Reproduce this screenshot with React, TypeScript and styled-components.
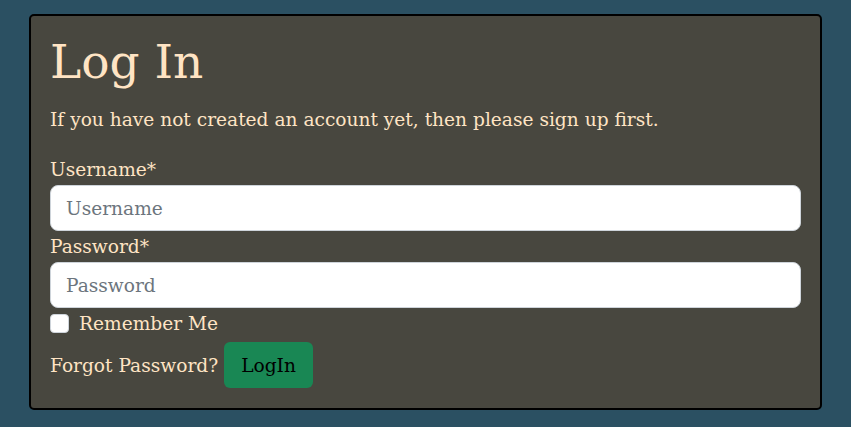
import styled, { createGlobalStyle } from "styled-components";

const GlobalStyle = createGlobalStyle`
  html, body {
    margin: 0;
    padding: 0;
    background: #2b5062;
  }
  body {
    font-family: "DejaVu Serif", "Liberation Serif", serif;
  }
  * {
    box-sizing: border-box;
  }
`;

const Page = styled.div`
  padding: 14px 29px 0 29px;
  width: 851px;
  height: 427px;
`;

const Card = styled.form`
  width: 793px;
  background: #48473f;
  border: 2px solid #000;
  border-radius: 5px;
  padding: 20px 19px 20px 19px;
  color: #ffe4c4;
  font-size: 18.6px;
`;

const Title = styled.h1`
  margin: 0 0 17px 0;
  font-size: 47px;
  font-weight: 400;
  line-height: 52px;
`;

const Intro = styled.p`
  margin: 0 0 19px 0;
  line-height: 30px;
`;

const Label = styled.label`
  display: block;
  line-height: 31px;
`;

const Input = styled.input`
  display: block;
  width: 100%;
  height: 46px;
  padding: 6px 15px;
  font-family: inherit;
  font-size: 18.6px;
  color: #212529;
  background: #fff;
  border: 1px solid #ced4da;
  border-radius: 8px;
  &::placeholder {
    color: #6c757d;
  }
`;

const CheckRow = styled.div`
  display: flex;
  align-items: center;
  gap: 10px;
  height: 31px;
`;

const Check = styled.input`
  width: 19px;
  height: 19px;
  margin: 0;
  appearance: none;
  background: #fff;
  border: 1px solid #ced4da;
  border-radius: 4px;
`;

const Actions = styled.div`
  display: flex;
  align-items: center;
  gap: 6px;
  margin-top: 3px;
`;

const Button = styled.button`
  height: 46px;
  padding: 0 17px;
  font-family: inherit;
  font-size: 18.6px;
  color: #000;
  background: #198754;
  border: none;
  border-radius: 6px;
`;

export default function App() {
  return (
    <>
      <GlobalStyle />
      <Page>
        <Card onSubmit={(e) => e.preventDefault()}>
          <Title>Log In</Title>
          <Intro>If you have not created an account yet, then please sign up first.</Intro>
          <Label htmlFor="username">Username*</Label>
          <Input id="username" placeholder="Username" />
          <Label htmlFor="password">Password*</Label>
          <Input id="password" type="password" placeholder="Password" />
          <CheckRow>
            <Check type="checkbox" id="remember" />
            <label htmlFor="remember">Remember Me</label>
          </CheckRow>
          <Actions>
            <span>Forgot Password?</span>
            <Button type="submit">LogIn</Button>
          </Actions>
        </Card>
      </Page>
    </>
  );
}
